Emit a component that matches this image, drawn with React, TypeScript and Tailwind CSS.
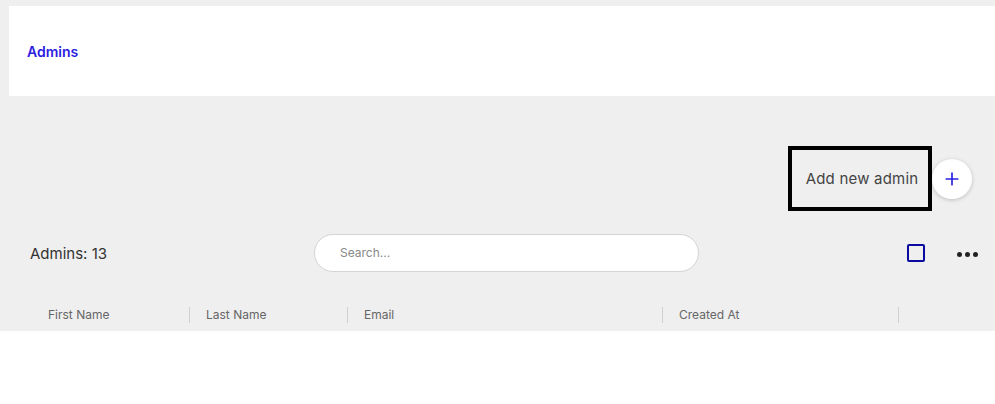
import { Plus } from "lucide-react";

const columns = [
  { label: "First Name", w: "w-[158px]" },
  { label: "Last Name", w: "w-[158px]" },
  { label: "Email", w: "w-[315px]" },
  { label: "Created At", w: "w-[236px]" },
];

export default function App() {
  return (
    <div className="w-[995px] h-[404px] bg-white font-['Inter',sans-serif] overflow-hidden">
      <div className="bg-[#efefef] pt-[6px] h-[331px]">
        <div className="ml-[9px] h-[90px] bg-white flex items-center pl-[18px] pt-[1px]">
          <span className="text-[14px] font-semibold text-[#2b20e0]">Admins</span>
        </div>

        <div className="flex justify-end items-center mt-[50px] pr-[23px]">
          <div className="w-[144px] h-[65px] border-4 border-black flex items-center justify-center">
            <span className="text-[15px] text-[#444] pt-[2px] pl-[4px] tracking-[0.2px]">Add new admin</span>
          </div>
          <button className="w-[40px] h-[40px] rounded-full bg-white shadow-[0_1px_4px_rgba(0,0,0,0.2)] flex items-center justify-center">
            <Plus className="w-[20px] h-[20px] text-[#2b20e0]" strokeWidth={2} />
          </button>
        </div>

        <div className="flex items-center mt-[23px] h-[38px]">
          <div className="w-[314px] pl-[30px] pt-[2px] text-[15px] text-[#333]">Admins: 13</div>
          <div className="w-[385px] h-[38px] rounded-full bg-white border border-[#d4d4d4] flex items-center pl-[25px]">
            <span className="text-[12px] text-[#888]">Search...</span>
          </div>
          <div className="ml-[208px] w-[18px] h-[18px] border-2 border-[#0a0aa0] rounded-[2px]" />
          <div className="ml-[32px] flex gap-[3px] pt-[2px]">
            <span className="w-[5px] h-[5px] rounded-full bg-[#222]" />
            <span className="w-[5px] h-[5px] rounded-full bg-[#222]" />
            <span className="w-[5px] h-[5px] rounded-full bg-[#222]" />
          </div>
        </div>

        <div className="flex items-center mt-[28px] pl-[32px] h-[30px]">
          {columns.map((c) => (
            <div key={c.label} className={`${c.w} h-[16px] flex items-center justify-between`}>
              <span className="pl-[16px] text-[12px] text-[#666]">{c.label}</span>
              <span className="w-px h-[16px] bg-[#d0d0d0]" />
            </div>
          ))}
        </div>
      </div>
    </div>
  );
}
